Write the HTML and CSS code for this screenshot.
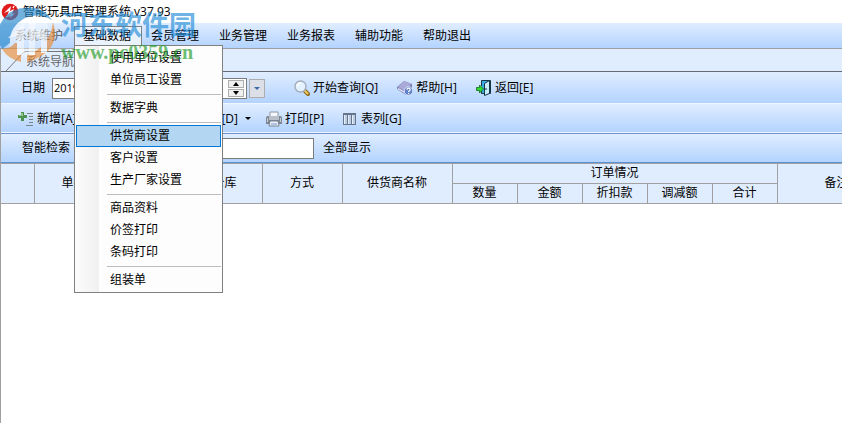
FILE: index.html
```html
<!DOCTYPE html>
<html lang="zh-CN">
<head>
<meta charset="utf-8">
<title>智能玩具店管理系统 v37.93</title>
<link rel="stylesheet" href="styles.css">
</head>
<body>
<header class="titlebar">
  <svg class="app-icon" viewBox="0 0 18 18" aria-hidden="true">
    <circle cx="9" cy="9" r="8.3" fill="#e01d1c"/>
    <path d="M3 10l7-7-1 5 4-2-2 5 3-1-5 5 1-4-4 2 2-5z" fill="#fff"/>
    <path d="M5 14l5-2M12 5l1-2" stroke="#fff" stroke-width="1.3"/>
  </svg>
  <span>智能玩具店管理系统 v37.93</span>
</header>

<nav class="menubar">
  <div class="menu-slot"><button class="menu-button muted">系统维护</button></div>
  <div class="menu-slot">
    <button class="menu-button open">基础数据</button>
    <div class="dropdown">
      <button class="option">使用单位设置</button>
      <button class="option">单位员工设置</button>
      <hr>
      <button class="option">数据字典</button>
      <hr>
      <button class="option selected">供货商设置</button>
      <button class="option">客户设置</button>
      <button class="option">生产厂家设置</button>
      <hr>
      <button class="option">商品资料</button>
      <button class="option">价签打印</button>
      <button class="option">条码打印</button>
      <hr>
      <button class="option">组装单</button>
    </div>
  </div>
  <div class="menu-slot"><button class="menu-button">会员管理</button></div>
  <div class="menu-slot"><button class="menu-button">业务管理</button></div>
  <div class="menu-slot"><button class="menu-button">业务报表</button></div>
  <div class="menu-slot"><button class="menu-button">辅助功能</button></div>
  <div class="menu-slot"><button class="menu-button">帮助退出</button></div>
</nav>

<main class="workspace">
  <div class="tabs">
    <svg class="tab-edge" viewBox="0 0 20 22" aria-hidden="true"><path d="M0 22L16 5q2-2.500 4-2.500" fill="none" stroke="#777"/></svg>
    <button class="tab">系统导航</button>
  </div>

  <div class="toolbar query">
    <label for="date">日期</label>
    <div class="date-box">
      <input id="date" type="text" value="2019">
      <div class="spinner">
        <button aria-label="增加"><svg viewBox="0 0 14 6"><path d="M4 5h6L7 1z"/></svg></button>
        <button aria-label="减少"><svg viewBox="0 0 14 6"><path d="M4 1h6L7 5z"/></svg></button>
      </div>
    </div>
    <button class="picker" aria-label="选择日期"><svg viewBox="0 0 14 17"><path d="M4 7h6l-3 3z" fill="#3c6ca8"/></svg></button>
    <div class="actions">
      <button class="tool">
        <svg viewBox="0 0 16 16"><path d="M11 11l3 3" stroke="#8a671c" stroke-width="4" stroke-linecap="round"/><path d="M11 11l2.500 2.500" stroke="#f0c95a" stroke-width="2" stroke-linecap="round"/><circle cx="6.500" cy="6.500" r="5.500" fill="#e4f1ff" stroke="#a2adbb" stroke-width="1.400"/><path d="M3 6q1-3 4-3" fill="none" stroke="#fff" stroke-width="1.500"/></svg>
        开始查询[Q]
      </button>
      <button class="tool">
        <svg viewBox="0 0 16 16"><path d="M0 7l7-6 8 3v4l-6 7-9-6z" fill="#7d80b8"/><path d="M1 7l6-6 7 3-6 7z" fill="#aaa9d8"/><path d="M1 8.500l7 4 2-2" fill="none" stroke="#eeeefa" stroke-width="1.200"/><circle cx="11.500" cy="11" r="4.300" fill="#5f80c8" stroke="#dbe6fb"/><path d="M10 9.800q0-1.600 1.600-1.600T13.200 9.700q0 .8-1.600 1.700v.6M11.600 13v1" fill="none" stroke="#fff" stroke-width="1.200"/></svg>
        帮助[H]
      </button>
      <button class="tool">
        <svg viewBox="0 0 16 16"><path d="M5.500 6V.5h9v13H5.500V10" fill="#3cabe3" stroke="#173646"/><path d="M8.500 3.500l5-3v13l-5 2z" fill="#c8edfc" stroke="#173646"/><path d="M10 8v2" stroke="#173646"/><path d="M.5 7.500h3V5l4 4-4 4v-2.500h-3z" fill="#30dd35" stroke="#146a1b" stroke-width=".8"/></svg>
        返回[E]
      </button>
    </div>
  </div>

  <div class="toolbar edit">
    <div class="edit-left">
      <button class="tool">
        <svg viewBox="0 0 16 16"><path d="M3 1h3v3h3v3H6v3H3V7H0V4h3z" fill="#4f9153"/><path d="M3 2h2v3H1V4h2z" fill="#8ec58c"/><path d="M9 2.500h6M11 5.500h4M11 8.500h4M11 11.500h4M8 14.500h7" stroke="#7a838e"/></svg>
        新增[A]
      </button>
      <button class="tool">删除[D]</button>
    </div>
    <svg class="caret" viewBox="0 0 6 4"><path d="M0 0h6L3 3z"/></svg>
    <button class="tool">
      <svg viewBox="0 0 16 16"><path d="M4 1h8v6H4z" fill="#f5f8fc" stroke="#8e97a2"/><path d="M0 7q0-2 2-2h12q2 0 2 2v6H0z" fill="#7d8692"/><path d="M3 5h10v4H3z" fill="#b9c0c9"/><path d="M1 7h1v4H1zM14 7h1v4h-1z" fill="#c9ced6"/><path d="M4 10h8l1 5H3z" fill="#edf3fb" stroke="#7a8491"/><path d="M5 13h6" stroke="#7393d1"/></svg>
      打印[P]
    </button>
    <button class="tool">
      <svg viewBox="0 0 16 16"><path d="M1 2h13v12H1z" fill="#66758b"/><path d="M2 4h3v9H2zM6 4h3v9H6zM10 4h3v9h-3z" fill="#bccde4"/><path d="M2 4h1v9H2zM6 4h1v9H6zM10 4h1v9h-1z" fill="#e6eef9"/></svg>
      表列[G]
    </button>
  </div>

  <div class="toolbar search">
    <label for="search">智能检索</label>
    <input id="search" type="text">
    <button class="tool">全部显示</button>
  </div>

  <div class="grid-area">
    <table>
      <colgroup>
        <col class="c-mark"><col class="c-number"><col class="c-date"><col class="c-store"><col class="c-mode"><col class="c-supplier"><col class="c-value"><col class="c-value"><col class="c-value"><col class="c-value"><col class="c-value"><col class="c-note">
      </colgroup>
      <thead>
        <tr>
          <th rowspan="2"></th><th rowspan="2">单据号</th><th rowspan="2">日期</th><th rowspan="2">仓库</th><th rowspan="2">方式</th><th rowspan="2">供货商名称</th>
          <th colspan="5">订单情况</th><th rowspan="2">备注</th>
        </tr>
        <tr><th>数量</th><th>金额</th><th>折扣款</th><th>调减额</th><th>合计</th></tr>
      </thead>
    </table>
  </div>
</main>

<div class="watermark">
  <svg viewBox="0 0 58 56" aria-hidden="true">
    <circle cx="28" cy="28" r="22" fill="#fff" opacity=".55"/>
    <path d="M2 42A27 27 0 0 1 24 1Q42-2 52 13 38 5 25 11 9 20 10 36z" fill="#2588cb"/>
    <path d="M2 42Q10 42 15 36h6V55Q8 52 2 42z" fill="#ed8d35"/>
    <path d="M53 15Q62 45 27 55V48Q50 40 53 15z" fill="#ed8d35"/>
    <path d="M8 31L24 16V48H17V29zM29 11h6v13q12-3 12 7v15h-6V33q0-5-6-3v18h-6z" fill="#fff"/>
  </svg>
  <div class="watermark-text"><span class="brand">河东软件园</span><span class="site">www.pc0359.cn</span></div>
</div>
</body>
</html>
```
FILE: styles.css
```css
* { box-sizing: border-box; }

body {
  margin: 0;
  min-height: 100vh;
  display: flex;
  flex-direction: column;
  overflow: hidden;
  position: relative;
  background: #fff;
  color: #000;
  font: 12px/16px "Open Sans", "Noto Sans CJK SC", sans-serif;
}

button, input { font: inherit; color: inherit; }

button {
  margin: 0;
  padding: 0;
  border: 0;
  background: none;
  white-space: nowrap;
}

svg { display: block; flex: none; }

.titlebar {
  height: 23px;
  padding-left: 1px;
  display: flex;
  align-items: center;
  gap: 4px;
}

.app-icon { width: 18px; height: 18px; }

.menubar {
  height: 26px;
  padding-left: 6px;
  display: flex;
  align-items: center;
  border-bottom: 1px solid #a0a0a0;
  background: linear-gradient(#e0edff, #b3d3ff);
}

.menu-slot { position: relative; }

.menu-button {
  display: block;
  height: 20px;
  padding: 0 11px 0 9px;
}

.muted { color: #555; }

.open {
  padding: 0 10px 0 8px;
  border: 1px solid #808080;
  border-bottom: 0;
  background: #eaf2fd;
}

.dropdown {
  position: absolute;
  z-index: 2;
  top: 19px;
  left: 0;
  width: 149px;
  padding: 1px;
  border: 1px solid #808080;
  background: linear-gradient(90deg, #fcfcfc, #f0f0f0 24px, #fdfdfd 24px);
}

.option {
  display: block;
  width: 100%;
  height: 22px;
  padding-left: 33px;
  border: 1px solid transparent;
  text-align: left;
}

.selected {
  border-color: #0078d7;
  background: #b3d7f3;
}

.dropdown hr {
  height: 1px;
  margin: 3px 0 2px 31px;
  border: 0;
  background: #bdbdbd;
}

.workspace {
  flex: 1;
  border-left: 1px solid #a0a0a0;
}

.tabs {
  height: 23px;
  display: flex;
  align-items: flex-end;
  border-bottom: 1px solid #646b73;
  background: #e0edff;
}

.tab-edge { width: 20px; height: 22px; margin-left: 5px; }

.tab { height: 20px; color: #666; border-top: 1px solid #777; }

.toolbar {
  display: flex;
  align-items: center;
  background: linear-gradient(#e0edff, #b3d3ff);
}

.query { height: 31px; padding: 1px 0 0 20px; }

.query label { width: 31px; }

.date-box {
  width: 195px;
  height: 21px;
  display: flex;
  align-items: center;
  border: 1px solid #7b7b7b;
  background: #fff;
}

.date-box input {
  flex: 1;
  min-width: 0;
  padding: 0 1px;
  border: 0;
  font-size: 11px;
}

.spinner { display: grid; gap: 1px; padding-right: 2px; }

.spinner button {
  width: 16px;
  height: 8px;
  border: 1px solid #adadad;
  background: #f0f0f0;
}

.spinner svg { width: 14px; height: 6px; }

.picker {
  width: 16px;
  height: 19px;
  margin-left: 2px;
  border: 1px solid #adadad;
  background: #dcdfe6;
}

.picker svg { width: 14px; height: 17px; }

.actions { display: flex; gap: 19px; margin-left: 29px; }

.tool { display: flex; align-items: center; gap: 3px; }

.tool svg { width: 16px; height: 16px; }

.edit {
  height: 30px;
  padding: 1px 0 0 17px;
  border-top: 1px solid #eef5ff;
  border-bottom: 1px solid #eef5ff;
}

.edit-left { width: 220px; display: flex; justify-content: space-between; }

.caret { width: 6px; height: 4px; margin: 0 15px 0 7px; }

.edit > .tool { margin-right: 18px; }

.search {
  height: 30px;
  padding-left: 21px;
  border-top: 1px solid #7094c6;
  border-bottom: 1px solid #5c91d8;
}

.search input {
  width: 240px;
  height: 21px;
  margin: 0 9px 0 4px;
  border: 1px solid #7b7b7b;
}

.grid-area { overflow: hidden; }

table {
  width: 896px;
  table-layout: fixed;
  border-spacing: 0;
  border-top: 1px solid #a0a0a0;
}

th {
  height: 20px;
  padding: 0 1px 1px 0;
  border-right: 1px solid #a0a0a0;
  border-bottom: 1px solid #a0a0a0;
  background: #e0edff;
  font-weight: 400;
}

.c-mark { width: 34px; }
.c-number { width: 91px; }
.c-date { width: 62px; }
.c-store { width: 75px; }
.c-mode { width: 80px; }
.c-supplier { width: 110px; }
.c-value { width: 65px; }
.c-note { width: 119px; }

.watermark {
  position: absolute;
  z-index: 3;
  top: 7px;
  left: 0;
  display: flex;
  pointer-events: none;
  opacity: 0.65;
}

.watermark svg { width: 58px; height: 56px; }

.watermark-text { display: grid; align-content: start; padding-left: 3px; }

.brand {
  color: #248cd8;
  font: 700 27px/33px "Noto Sans CJK SC", sans-serif;
}

.site {
  color: #219b29;
  font: 700 20px/24px "Liberation Serif", serif;
}
```
